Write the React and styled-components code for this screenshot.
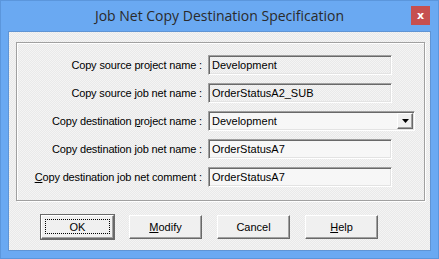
import React from "react";
import styled, { createGlobalStyle } from "styled-components";

const GlobalStyle = createGlobalStyle`
  html, body {
    margin: 0;
    padding: 0;
    overflow: hidden;
  }
  body {
    font-family: "Liberation Sans", Arial, sans-serif;
  }
`;

const Window = styled.div`
  width: 439px;
  height: 259px;
  box-sizing: border-box;
  background-color: #6aa9f2;
  border: 1px solid #5b96dc;
  display: flex;
  flex-direction: column;
`;

const TitleBar = styled.div`
  height: 30px;
  position: relative;
  display: flex;
  align-items: center;
  justify-content: center;
`;

const Title = styled.div`
  font-family: "Open Sans", "Noto Sans", sans-serif;
  font-size: 14px;
  color: #2a2a2a;
  margin-top: -1px;
`;

const CloseButton = styled.div`
  position: absolute;
  right: 8px;
  top: 5px;
  width: 19px;
  height: 19px;
  background-color: #c75050;
  color: #fff;
  display: flex;
  align-items: center;
  justify-content: center;
  font-family: "DejaVu Sans", sans-serif;
  font-size: 11px;
  font-weight: bold;
`;

const Client = styled.div`
  flex: 1;
  margin: 0 7px 7px 7px;
  border: 1px solid #5f94d4;
  background-color: #f0f0f0;
  background-image: repeating-conic-gradient(#f4f4f4 0% 25%, #e9e9e9 0% 50%);
  background-size: 2px 2px;
  display: flex;
  flex-direction: column;
  padding: 10px 5px 0 7px;
`;

const GroupBox = styled.div`
  border: 1px solid #a0a0a0;
  box-shadow: inset 1px 1px 0 #fff, 1px 1px 0 #fff;
  height: 159px;
  box-sizing: border-box;
  padding: 12px 0 0 0;
  display: grid;
  grid-template-columns: 191px 1fr;
  grid-auto-rows: 20px;
  row-gap: 8px;
  align-items: center;
`;

const Label = styled.div`
  font-size: 11px;
  color: #000;
  text-align: right;
  padding-right: 6px;
  white-space: nowrap;
  letter-spacing: -0.15px;
`;

const U = styled.span`
  text-decoration: underline;
`;

const Field = styled.div`
  box-sizing: border-box;
  height: 20px;
  width: ${(p) => p.$width}px;
  border-top: 1px solid #a0a0a0;
  border-left: 1px solid #a0a0a0;
  border-right: 1px solid #fff;
  border-bottom: 1px solid #fff;
  box-shadow: inset 1px 1px 0 #696969, inset -1px -1px 0 #e3e3e3;
  background-color: ${(p) => (p.$editable ? "#f7f7f7" : "transparent")};
  font-size: 11px;
  padding: 0 3px;
  display: flex;
  align-items: center;
  justify-content: space-between;
`;

const DropButton = styled.div`
  width: 16px;
  height: 16px;
  box-sizing: border-box;
  margin-right: -2px;
  background: #f0f0f0;
  border-top: 1px solid #fff;
  border-left: 1px solid #fff;
  border-right: 1px solid #696969;
  border-bottom: 1px solid #696969;
  box-shadow: inset -1px -1px 0 #a0a0a0;
  display: flex;
  align-items: center;
  justify-content: center;
`;

const ButtonRow = styled.div`
  display: flex;
  gap: 15px;
  padding: 14px 0 0 25px;
`;

const Button = styled.div`
  width: 73px;
  height: 24px;
  box-sizing: border-box;
  background-color: #f0f0f0;
  border-top: 1px solid #fff;
  border-left: 1px solid #fff;
  border-right: 1px solid #696969;
  border-bottom: 1px solid #696969;
  box-shadow: inset -1px -1px 0 #a0a0a0;
  font-size: 11px;
  display: flex;
  align-items: center;
  justify-content: center;
  padding-bottom: 1px;
  ${(p) =>
    p.$default &&
    `
    outline: 1px solid #696969;
    outline-offset: 0;
  `}
`;

const FocusRing = styled.div`
  position: absolute;
  inset: 3px;
  border: 1px dotted #000;
`;

const DefaultWrap = styled.div`
  position: relative;
  width: 100%;
  height: 100%;
  display: flex;
  align-items: center;
  justify-content: center;
`;

const rows = [
  { label: "Copy source project name :", value: "Development" },
  { label: "Copy source job net name :", value: "OrderStatusA2_SUB" },
  {
    label: (
      <>
        Copy destination <U>p</U>roject name :
      </>
    ),
    value: "Development",
    combo: true,
  },
  { label: "Copy destination job net name :", value: "OrderStatusA7", editable: true },
  {
    label: (
      <>
        <U>C</U>opy destination job net comment :
      </>
    ),
    value: "OrderStatusA7",
    editable: true,
  },
];

export default function App() {
  return (
    <>
      <GlobalStyle />
      <Window>
        <TitleBar>
          <Title>Job Net Copy Destination Specification</Title>
          <CloseButton>x</CloseButton>
        </TitleBar>
        <Client>
          <GroupBox>
            {rows.map((row, i) => (
              <React.Fragment key={i}>
                <Label>{row.label}</Label>
                <Field $width={row.combo ? 207 : 184} $editable={row.editable || row.combo}>
                  <span>{row.value}</span>
                  {row.combo && (
                    <DropButton>
                      <svg width="7" height="4" viewBox="0 0 7 4">
                        <path d="M0 0h7L3.5 4z" fill="#000" />
                      </svg>
                    </DropButton>
                  )}
                </Field>
              </React.Fragment>
            ))}
          </GroupBox>
          <ButtonRow>
            <Button $default>
              <DefaultWrap>
                <FocusRing />
                OK
              </DefaultWrap>
            </Button>
            <Button>
              <span>
                <U>M</U>odify
              </span>
            </Button>
            <Button>Cancel</Button>
            <Button>
              <span>
                <U>H</U>elp
              </span>
            </Button>
          </ButtonRow>
        </Client>
      </Window>
    </>
  );
}
